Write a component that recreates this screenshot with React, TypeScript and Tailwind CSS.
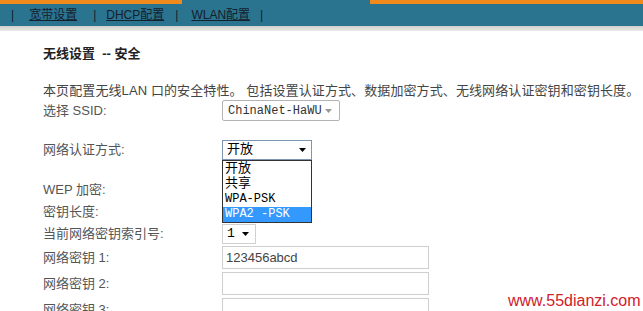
import React from "react";

const cjk = { fontFamily: '"Liberation Sans", "Noto Sans CJK SC", sans-serif' };
const mono = { fontFamily: '"Liberation Mono", "Noto Sans CJK SC", monospace' };

function Arrow({ color = "#000" }: { color?: string }) {
  return (
    <svg width="7" height="4" viewBox="0 0 7 4">
      <polygon points="0,0 7,0 3.5,4" fill={color} />
    </svg>
  );
}

function Row({ label, h, mt = 0, children }: { label: string; h: number; mt?: number; children?: React.ReactNode }) {
  return (
    <div className="flex items-center" style={{ height: h, marginTop: mt }}>
      <div className="w-[179px] text-[13px] text-[#555]">{label}</div>
      {children}
    </div>
  );
}

export default function App() {
  return (
    <div className="relative w-[643px] h-[311px] overflow-hidden bg-white" style={cjk}>
      <div className="h-[26px] bg-[#2b7490] flex flex-col">
        <div className="h-[4px] flex">
          <div className="w-[182px] bg-[#f08a1c]" />
          <div className="w-[188px]" />
          <div className="flex-1 bg-[#f08a1c]" />
        </div>
        <div className="flex-1 flex items-center text-[12px] text-[#14202c]">
          <span className="ml-[11px]">|</span>
          <span className="ml-[15px] underline">宽带设置</span>
          <span className="ml-[16px]">|</span>
          <span className="ml-[10px] underline">DHCP配置</span>
          <span className="ml-[11px]">|</span>
          <span className="ml-[13px] underline">WLAN配置</span>
          <span className="ml-[10px]">|</span>
        </div>
      </div>
      <div className="h-[5px] bg-gradient-to-b from-[#cfcfcb] to-[#e9e9e7]" />
      <div className="pl-[43px]">
        <div className="mt-[13px] h-[20px] flex items-center text-[13px] font-bold text-[#222] whitespace-pre">无线设置  -- 安全</div>
        <div className="mt-[18px] h-[18px] flex items-center text-[13px] text-[#444] whitespace-nowrap tracking-[0.1px]">
          本页配置无线LAN 口的安全特性。 包括设置认证方式、数据加密方式、无线网络认证密钥和密钥长度。
        </div>
        <Row label="选择 SSID:" h={21}>
          <div className="w-[118px] h-[21px] border border-[#b4b4b4] rounded-[2px] flex items-center justify-between pl-[5px] pr-[7px] text-[12px] text-[#333]" style={mono}>
            <span>ChinaNet-HaWU</span>
            <Arrow color="#999" />
          </div>
        </Row>
        <div className="relative">
          <Row label="网络认证方式:" h={20} mt={19}>
            <div className="w-[90px] h-[20px] border border-[#7d97b3] flex items-center justify-between pl-[4px] pr-[5px] text-[13px] text-[#000]" style={mono}>
              <span>开放</span>
              <Arrow />
            </div>
          </Row>
          <div className="absolute left-[179px] top-[20px] w-[90px] h-[63px] border border-[#333] bg-white text-[#000] flex flex-col z-10" style={mono}>
            <div className="h-[15px] leading-[15px] pl-[2px] text-[13px]">开放</div>
            <div className="h-[15px] leading-[15px] pl-[2px] text-[13px]">共享</div>
            <div className="h-[16px] leading-[16px] pl-[2px] text-[12px]">WPA-PSK</div>
            <div className="h-[15px] leading-[15px] pl-[2px] text-[12px] bg-[#3399ff] text-white">WPA2 -PSK</div>
          </div>
        </div>
        <Row label="WEP 加密:" h={20} mt={20} />
        <Row label="密钥长度:" h={21} mt={1} />
        <Row label="当前网络密钥索引号:" h={20} mt={2}>
          <div className="w-[34px] h-[20px] border border-[#d0d0d0] flex items-center justify-between pl-[4px] pr-[6px] text-[13px] text-[#000]" style={mono}>
            <span>1</span>
            <Arrow />
          </div>
        </Row>
        <Row label="网络密钥 1:" h={23} mt={2}>
          <div className="w-[207px] h-[23px] border border-[#cfcfcf] flex items-center pl-[3px] text-[13px] text-[#444]">123456abcd</div>
        </Row>
        <Row label="网络密钥 2:" h={23} mt={3}>
          <div className="w-[207px] h-[23px] border border-[#cfcfcf]" />
        </Row>
        <Row label="网络密钥 3:" h={23} mt={3}>
          <div className="w-[207px] h-[23px] border border-[#cfcfcf]" />
        </Row>
      </div>
      <div className="absolute left-[508px] top-[289px] text-[16px] text-[#d0202a]" style={{ fontFamily: '"Liberation Sans", sans-serif' }}>
        www.55dianzi.com
      </div>
    </div>
  );
}
